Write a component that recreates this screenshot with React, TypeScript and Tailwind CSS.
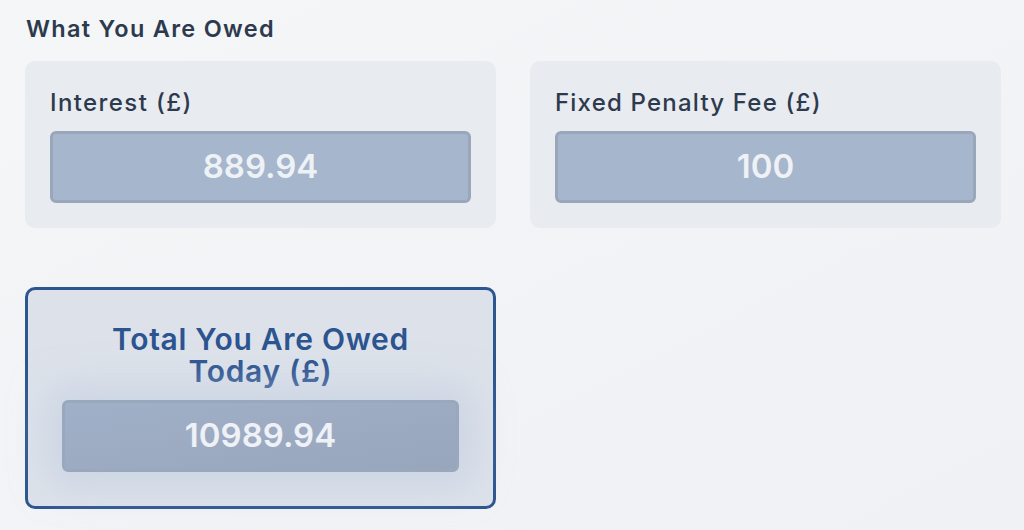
export default function App() {
  const font = { fontFamily: "Inter, 'Noto Sans', sans-serif" };
  return (
    <div className="w-[1024px] h-[530px] bg-gradient-to-br from-[#f5f6f8] to-[#eff1f4] overflow-hidden" style={font}>
      <div className="pl-[25px] pr-[23px] pt-[13px]">
        <h2 className="text-[23.5px] leading-[32px] font-semibold tracking-[1.3px] text-[#2d3a4e] pl-[1px]">What You Are Owed</h2>
        <div className="grid grid-cols-2 gap-[34px] mt-[16px]">
          <div className="bg-[#e8ebef] rounded-[10px] px-[25px] pt-[25px] pb-[25px]">
            <div className="text-[24px] leading-[34px] font-medium tracking-[1.4px] text-[#2d3a4e]">Interest (£)</div>
            <div className="mt-[11px] h-[72px] rounded-[6px] border-[3px] border-[#9aa7ba] bg-[#a6b6cc] flex items-center justify-center text-[33px] font-semibold text-[#eef1f5]">889.94</div>
          </div>
          <div className="bg-[#e8ebef] rounded-[10px] px-[25px] pt-[25px] pb-[25px]">
            <div className="text-[24px] leading-[34px] font-medium tracking-[1.2px] text-[#2d3a4e]">Fixed Penalty Fee (£)</div>
            <div className="mt-[11px] h-[72px] rounded-[6px] border-[3px] border-[#9aa7ba] bg-[#a6b6cc] flex items-center justify-center text-[33px] font-semibold text-[#eef1f5]">100</div>
          </div>
        </div>
        <div className="grid grid-cols-2 gap-[34px] mt-[59px]">
          <div className="h-[222px] bg-[#dde2ea] rounded-[10px] border-[3px] border-[#2d5590] px-[34px] pt-[33px] flex flex-col items-center">
            <div className="text-[30px] leading-[32px] font-semibold tracking-[0.7px] text-[#2c5490] text-center">Total You Are Owed<br />Today (£)</div>
            <div className="mt-[13px] w-full h-[72px] rounded-[6px] border-[3px] border-[#9aa8be] bg-gradient-to-br from-[#a0b0c8] to-[#98a6bc] flex items-center justify-center text-[33px] font-semibold text-[#eef1f5] shadow-[0_0_36px_14px_rgba(190,202,222,0.55)]">10989.94</div>
          </div>
          <div />
        </div>
      </div>
    </div>
  );
}
